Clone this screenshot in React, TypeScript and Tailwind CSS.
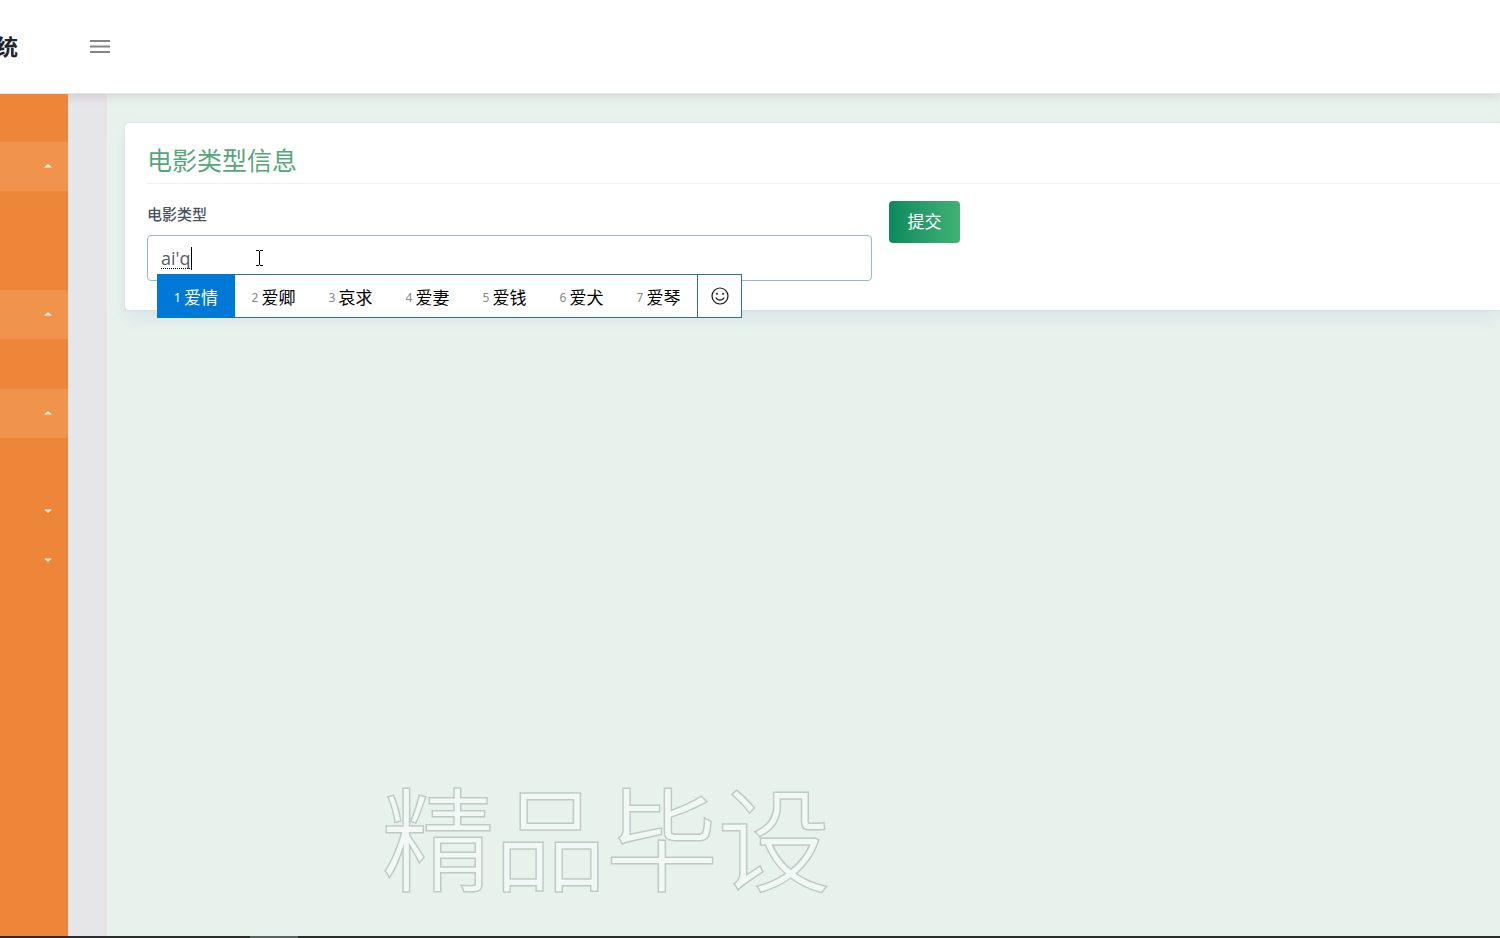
import { useState } from "react";

const candidates = ["爱情", "爱卿", "哀求", "爱妻", "爱钱", "爱犬", "爱琴"];

function Caret({ up }: { up?: boolean }) {
  return (
    <svg width="8" height="4" viewBox="0 0 8 4" className="fill-[#fff3dc]">
      <path d={up ? "M0 3.5L4 0L8 3.5Z" : "M0 0.5L4 4L8 0.5Z"} />
    </svg>
  );
}

function MenuHeader({ label, open = false }: { label: string; open?: boolean }) {
  const [expanded, setExpanded] = useState(open);

  return (
    <button
      type="button"
      aria-label={label}
      aria-expanded={expanded}
      onClick={() => setExpanded(!expanded)}
      className={`flex h-[49px] w-full items-center justify-end pb-[2px] pr-4 ${expanded ? "bg-[#f0934c]" : ""}`}
    >
      <Caret up={expanded} />
    </button>
  );
}

function Sidebar() {
  return (
    <nav className="relative z-20 w-[68px] shrink-0 bg-[#ee8639]">
      <div className="h-12" />
      <MenuHeader label="菜单一" open />
      <div className="h-[99px]" />
      <MenuHeader label="菜单二" open />
      <div className="h-[50px]" />
      <MenuHeader label="菜单三" open />
      <div className="h-[49px]" />
      <MenuHeader label="菜单四" />
      <MenuHeader label="菜单五" />
    </nav>
  );
}

function CandidateBar() {
  return (
    <div className="absolute left-[10px] top-[39px] z-10 flex h-11 border border-[#2f7099] bg-white font-['Noto_Sans','Noto_Sans_CJK_SC',sans-serif]">
      <ol className="-my-px -ml-px flex">
        {candidates.map((word, i) => (
          <li
            key={word}
            className={`flex items-center justify-center gap-[3px] pt-[3px] text-[17px] ${
              i === 0 ? "w-[78px] bg-[#0078d7] text-white" : "w-[77px] border-y border-[#2f7099] text-black"
            }`}
          >
            <span className={`text-[12px] ${i === 0 ? "" : "text-[#888]"}`}>{i + 1}</span>
            <span>{word}</span>
          </li>
        ))}
      </ol>
      <button type="button" aria-label="表情" className="flex w-11 items-center justify-center border-l border-[#2f7099]">
        <svg width="18" height="18" viewBox="0 0 18 18" fill="none" stroke="#111" strokeWidth="1.2" strokeLinecap="round">
          <circle cx="9" cy="9" r="8" />
          <path d="M5 11C6.6 13.8 11.4 13.8 13 11" />
          <circle cx="6" cy="6.7" r="0.4" fill="#111" />
          <circle cx="12" cy="6.7" r="0.4" fill="#111" />
        </svg>
      </button>
    </div>
  );
}

function TypeForm() {
  const [type, setType] = useState("ai'q");

  return (
    <form className="grid grid-cols-[725fr_611fr] items-start gap-x-[17px] pt-[17px]" onSubmit={(e) => e.preventDefault()}>
      <div>
        <label htmlFor="type" className="block h-[34px] pt-px text-[15px] font-medium leading-6 text-[#4a5361]">
          电影类型
        </label>
        <div className="relative">
          <input
            id="type"
            value={type}
            onChange={(e) => setType(e.target.value)}
            className="h-[46px] w-full rounded border border-[#8fbdcb] bg-white px-[13px] font-['Open_Sans',sans-serif] text-[18px] text-[#555c66] outline-none"
          />
          {/* IME composition underline and text caret */}
          <span className="absolute left-[14px] top-[33px] w-[29px] border-b border-dotted border-black" />
          <span className="absolute left-[44px] top-[12px] h-[23px] w-px bg-black" />
          <svg className="absolute left-[108px] top-[15px]" width="9" height="16" viewBox="0 0 9 16" fill="none" stroke="#000">
            <path d="M1 .5H4M5 .5H8M1 15.5H4M5 15.5H8M4.5 1V15" />
          </svg>
          <CandidateBar />
        </div>
      </div>
      <button
        type="submit"
        className="h-[42px] w-[71px] rounded bg-linear-to-r from-[#078a5f] to-[#3fb275] text-[17px] text-white"
      >
        提交
      </button>
    </form>
  );
}

export default function App() {
  return (
    <div className="relative flex min-h-screen flex-col overflow-hidden bg-[#e6e5e8] font-['Open_Sans','Noto_Sans_CJK_SC',sans-serif]">
      <header className="z-10 flex h-[94px] items-center border-b border-[#e8e5e6] bg-white shadow-[0_2px_10px_rgba(60,30,50,0.14)]">
        <div className="flex w-[18px] shrink-0 justify-end overflow-hidden">
          <span className="text-[22px] font-bold text-[#212529]">统</span>
        </div>
        <button type="button" aria-label="切换菜单" className="ml-[72px]">
          <svg width="20" height="14" viewBox="0 0 20 14" fill="none" stroke="#858585" strokeWidth="2">
            <path d="M0 1H20M0 6.5H20M0 12H20" />
          </svg>
        </button>
      </header>

      <div className="flex grow">
        <Sidebar />
        <main className="ml-[39px] grow bg-[#e8f2ed] pl-[18px] pt-[29px]">
          <section className="h-[187px] rounded-l-[3px] bg-white pl-[22px] shadow-[0_8px_18px_rgba(90,110,170,0.11),0_0_1px_rgba(60,70,110,0.4)]">
            <h3 className="h-[61px] border-b border-[#eeeeef] pt-[19px] text-[25px] leading-9 text-[#57a67b]">
              电影类型信息
            </h3>
            <TypeForm />
          </section>
        </main>
      </div>

      <div className="flex h-[2px] shrink-0 bg-[#2b2d30]">
        <div className="ml-[250px] w-12 bg-[#5a6362]" />
      </div>

      <p className="pointer-events-none absolute bottom-12 left-[382px] font-['Noto_Sans_CJK_SC',sans-serif] text-[112px] font-light leading-none text-[#f2f8f5] [-webkit-text-stroke:3px_#bfcac5] [paint-order:stroke_fill]">
        精品毕设
      </p>
    </div>
  );
}
